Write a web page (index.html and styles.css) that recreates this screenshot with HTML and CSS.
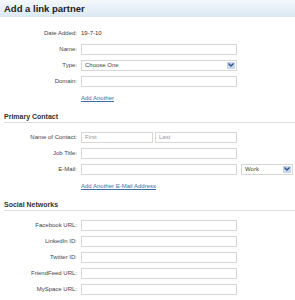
FILE: index.html
```html
<!DOCTYPE html>
<html lang="en">
<head>
  <meta charset="UTF-8">
  <title>Add a link partner</title>
  <link rel="stylesheet" href="styles.css">
</head>
<body>
  <div class="page-head">
    <h1>Add a link partner</h1>
  </div>

  <form class="partner-form">
    <div class="row">
      <span class="label">Date Added:</span>
      <span class="value">19-7-10</span>
    </div>
    <div class="row">
      <label class="label">Name:</label>
      <input class="field" type="text">
    </div>
    <div class="row">
      <label class="label">Type:</label>
      <div class="select field">
        <span>Choose One</span>
        <span class="arrow"><svg width="6" height="4" viewBox="0 0 6 4"><path d="M0.5 0.5 L3 3 L5.5 0.5" fill="none" stroke="#2d4f86" stroke-width="1.3"/></svg></span>
      </div>
    </div>
    <div class="row">
      <label class="label">Domain:</label>
      <input class="field" type="text">
    </div>
    <div class="row link-row">
      <span class="label"></span>
      <a href="#">Add Another</a>
    </div>

    <h2 class="section">Primary Contact</h2>

    <div class="row">
      <label class="label">Name of Contact:</label>
      <div class="pair">
        <input class="field" type="text" placeholder="First">
        <input class="field" type="text" placeholder="Last">
      </div>
    </div>
    <div class="row">
      <label class="label">Job Title:</label>
      <input class="field" type="text">
    </div>
    <div class="row">
      <label class="label">E-Mail:</label>
      <input class="field" type="text">
      <div class="select small">
        <span>Work</span>
        <span class="arrow"><svg width="6" height="4" viewBox="0 0 6 4"><path d="M0.5 0.5 L3 3 L5.5 0.5" fill="none" stroke="#2d4f86" stroke-width="1.3"/></svg></span>
      </div>
    </div>
    <div class="row link-row">
      <span class="label"></span>
      <a href="#">Add Another E-Mail Address</a>
    </div>

    <h2 class="section">Social Networks</h2>

    <div class="row">
      <label class="label">Facebook URL:</label>
      <input class="field" type="text">
    </div>
    <div class="row">
      <label class="label">LinkedIn ID:</label>
      <input class="field" type="text">
    </div>
    <div class="row">
      <label class="label">Twitter ID:</label>
      <input class="field" type="text">
    </div>
    <div class="row">
      <label class="label">FriendFeed URL:</label>
      <input class="field" type="text">
    </div>
    <div class="row">
      <label class="label">MySpace URL:</label>
      <input class="field" type="text">
    </div>
  </form>
</body>
</html>
```

FILE: styles.css
```css
body {
  margin: 0;
  background: #fff;
  font-family: "Liberation Sans", Arial, sans-serif;
  font-size: 6px;
  color: #444;
}
.page-head {
  height: 17px;
  background: linear-gradient(#f3f8fc, #dbe8f3);
  display: flex;
  align-items: center;
  padding-left: 4px;
}
h1 {
  margin: 0;
  font-size: 9.5px;
  font-weight: bold;
  color: #222;
}
.partner-form {
  padding-top: 8px;
}
.row {
  display: flex;
  align-items: center;
  height: 16px;
}
.label {
  width: 77px;
  text-align: right;
  margin-right: 4px;
  flex-shrink: 0;
}
.value {
  color: #333;
}
.field {
  box-sizing: border-box;
  width: 156px;
  height: 11px;
  margin: 0;
  padding: 0 3px;
  border: 1px solid #d6d6d6;
  background: #fff;
  font-family: inherit;
  font-size: 6px;
  color: #444;
}
.field::placeholder {
  color: #999;
}
.select {
  display: flex;
  align-items: center;
  justify-content: space-between;
  padding-right: 1px;
}
.select.small {
  box-sizing: border-box;
  width: 52px;
  height: 11px;
  margin-left: 4px;
  padding: 0 1px 0 3px;
  border: 1px solid #d6d6d6;
}
.arrow {
  width: 8px;
  height: 7px;
  background: #c6d6ec;
  display: flex;
  align-items: center;
  justify-content: center;
}
.pair {
  display: flex;
  gap: 2px;
}
.pair .field {
  width: 72px;
}
.pair .field + .field {
  width: 82px;
}
.link-row {
  height: 14px;
  margin-top: 2px;
}
.link-row a {
  color: #3a6ea5;
  text-decoration: underline;
}
.section {
  margin: 8px 0 6px 4px;
  padding-bottom: 2px;
  border-bottom: 1px solid #ddd;
  font-size: 7px;
  font-weight: bold;
  color: #333;
}
```
